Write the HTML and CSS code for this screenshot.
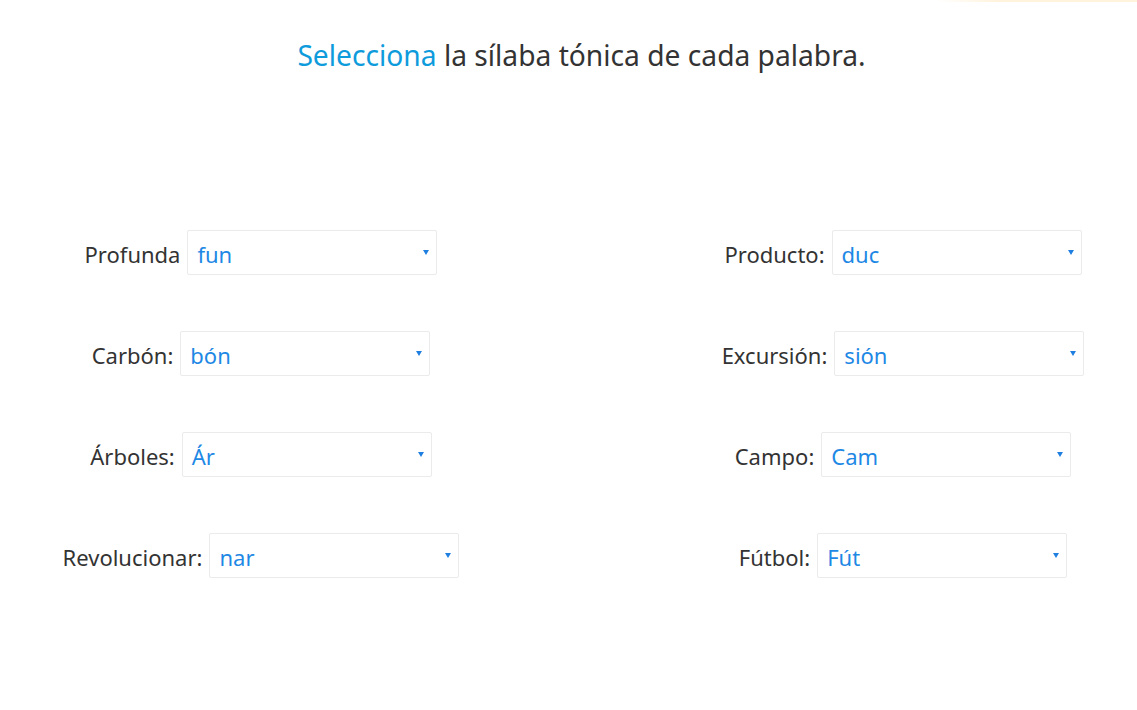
FILE: index.html
```html
<!DOCTYPE html>
<html lang="es">
<head>
<meta charset="utf-8">
<title>Sílaba tónica</title>
<link rel="stylesheet" href="styles.css">
</head>
<body>
<div class="topline"></div>
<h1 class="title"><span class="accent">Selecciona</span> la sílaba tónica de cada palabra.</h1>
<main class="grid">
  <div class="col">
    <div class="row"><label class="lbl">Profunda</label><div class="sel"><span class="val">fun</span><span class="caret"></span></div></div>
    <div class="row"><label class="lbl">Carbón:</label><div class="sel"><span class="val">bón</span><span class="caret"></span></div></div>
    <div class="row"><label class="lbl">Árboles:</label><div class="sel"><span class="val">Ár</span><span class="caret"></span></div></div>
    <div class="row"><label class="lbl">Revolucionar:</label><div class="sel"><span class="val">nar</span><span class="caret"></span></div></div>
  </div>
  <div class="col">
    <div class="row"><label class="lbl">Producto:</label><div class="sel"><span class="val">duc</span><span class="caret"></span></div></div>
    <div class="row"><label class="lbl">Excursión:</label><div class="sel"><span class="val">sión</span><span class="caret"></span></div></div>
    <div class="row"><label class="lbl">Campo:</label><div class="sel"><span class="val">Cam</span><span class="caret"></span></div></div>
    <div class="row"><label class="lbl">Fútbol:</label><div class="sel"><span class="val">Fút</span><span class="caret"></span></div></div>
  </div>
</main>
</body>
</html>
```
FILE: styles.css
```css
html, body { margin: 0; padding: 0; background: #fff; }
body {
  font-family: "Noto Sans", "Open Sans", sans-serif;
  color: #333;
  width: 1137px;
  height: 710px;
  overflow: hidden;
  position: relative;
}
.topline {
  position: absolute;
  top: 0; right: 0;
  width: 200px; height: 2px;
  background: linear-gradient(to right, rgba(255,236,200,0), #fff3dd 30%, #fff3dd);
}
.title {
  margin: 0;
  padding-top: 35px;
  padding-left: 26px;
  text-align: center;
  font-weight: 400;
  font-size: 28.2px;
  line-height: 40px;
  color: #333;
}
.accent { color: #0e9bdc; }
.grid {
  display: grid;
  grid-template-columns: 522px 468px;
  column-gap: 147px;
  margin-top: 155px;
}
.col { display: flex; flex-direction: column; gap: 56px; }
.row {
  display: flex;
  align-items: center;
  justify-content: center;
  gap: 7px;
  height: 45px;
}
.lbl { font-size: 22px; color: #333; padding-top: 2px; }
.sel {
  position: relative;
  box-sizing: border-box;
  width: 250px;
  height: 45px;
  border: 1px solid #ebebeb;
  border-radius: 2px;
  display: flex;
  align-items: center;
  padding-left: 9px;
  padding-top: 2px;
}
.val { font-size: 22px; color: #1e88e5; }
.caret {
  position: absolute;
  right: 7px;
  top: 19px;
  width: 0; height: 0;
  border-left: 3px solid transparent;
  border-right: 3px solid transparent;
  border-top: 5px solid #1e7fe0;
}
```
